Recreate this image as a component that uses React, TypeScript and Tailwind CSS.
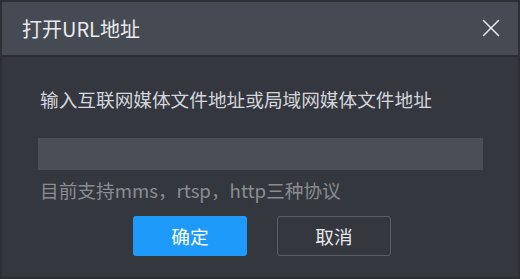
import { X } from "lucide-react";

export default function App() {
  return (
    <div
      className="w-[520px] h-[279px] bg-[#35373e] border-2 border-[#2e3035] flex flex-col"
      style={{ fontFamily: '"Microsoft YaHei", "Noto Sans CJK SC", sans-serif' }}
    >
      {/* header */}
      <div className="h-[55px] shrink-0 bg-[#464a52] border-b-2 border-[#2b2d32] flex items-center justify-between pl-[20px] pr-[12px]">
        <span className="text-[20px] leading-none text-[#e9ebee]">打开URL地址</span>
        <button className="text-[#e6e8eb] -mt-[1px]">
          <X size={30} strokeWidth={1.2} />
        </button>
      </div>

      {/* body */}
      <div className="flex flex-col px-[36px] pt-[30px]">
        <p className="text-[18.67px] leading-[24px] text-[#d3d6db] pl-[2px]">
          输入互联网媒体文件地址或局域网媒体文件地址
        </p>
        <input
          className="mt-[27px] h-[32px] w-[445px] bg-[#4a4e55] outline-none px-2 text-[#d3d6db]"
          type="text"
        />
        <p className="mt-[8px] text-[18.67px] leading-[24px] text-[#8a8c91] pl-[2px]">
          目前支持mms，rtsp，http三种协议
        </p>
        <div className="mt-[14px] flex justify-center gap-[30px] pl-[4px]">
          <button className="w-[114px] h-[40px] rounded-[3px] bg-[#1e9bfa] text-white text-[18.67px]">
            确定
          </button>
          <button className="w-[114px] h-[40px] rounded-[3px] border border-[#5b5e65] text-[#e6e8eb] text-[18.67px]">
            取消
          </button>
        </div>
      </div>
    </div>
  );
}
